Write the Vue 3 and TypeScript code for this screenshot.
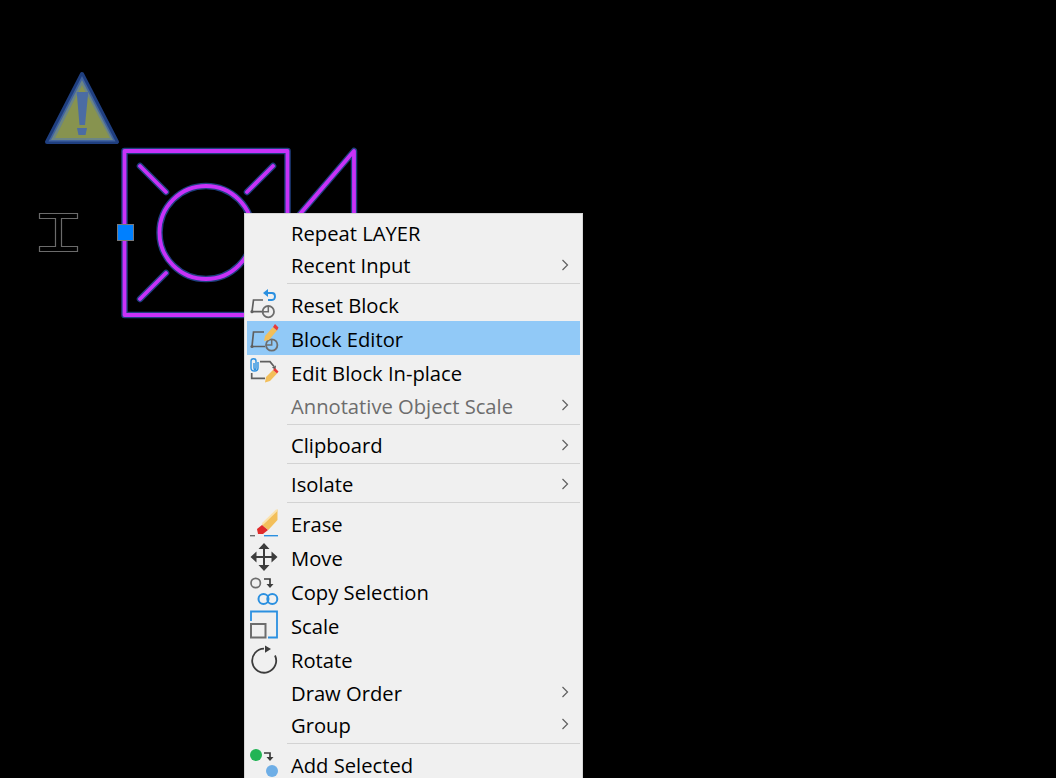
<script setup lang="ts">
type Row = { label?: string; icon?: string; sub?: boolean; disabled?: boolean; active?: boolean; kind?: string; sep?: string }
const rows: Row[] = [
  { label: 'Repeat LAYER' },
  { label: 'Recent Input', sub: true },
  { sep: 'base' },
  { label: 'Reset Block', icon: 'reset', kind: 'tall' },
  { label: 'Block Editor', icon: 'editor', kind: 'tall', active: true },
  { label: 'Edit Block In-place', icon: 'inplace', kind: 'tall' },
  { label: 'Annotative Object Scale', sub: true, disabled: true, kind: 'mid' },
  { sep: 'wide' },
  { label: 'Clipboard', sub: true },
  { sep: 'wide' },
  { label: 'Isolate', sub: true },
  { sep: 'base' },
  { label: 'Erase', icon: 'erase', kind: 'tall' },
  { label: 'Move', icon: 'move', kind: 'tall' },
  { label: 'Copy Selection', icon: 'copy', kind: 'tall' },
  { label: 'Scale', icon: 'scale', kind: 'tall' },
  { label: 'Rotate', icon: 'rotate', kind: 'tall' },
  { label: 'Draw Order', sub: true, kind: 'low' },
  { label: 'Group', sub: true, kind: 'low' },
  { sep: 'narrow' },
  { label: 'Add Selected', icon: 'add', kind: 'last' }
]
</script>

<template>
  <div class="screen">
    <svg class="drawing" width="1056" height="778" viewBox="0 0 1056 778" fill="none">
      <defs>
        <g id="shape">
          <rect x="124.500" y="151" width="163" height="164" />
          <circle cx="206" cy="232.500" r="46.500" />
          <path d="M140 166 166 192M273 166 247 192M140 299 166 273M300 214 354 151V320" />
        </g>
      </defs>
      <g stroke="#1f3f80" stroke-width="6.500" stroke-linecap="round" stroke-linejoin="round">
        <use href="#shape" />
      </g>
      <g stroke="#c832f8" stroke-width="3.800" stroke-linecap="round" stroke-linejoin="round">
        <use href="#shape" />
      </g>
      <path d="M82 74 117 142H47Z" fill="#1f3f80" stroke="#1f3f80" stroke-width="4" stroke-linejoin="round" />
      <path d="M82 76 115.500 141.500H48.500Z" fill="#41639f" />
      <path d="M82 80 113 140H51Z" fill="#6b8585" />
      <path d="M82 85 110 138H55Z" fill="#87934f" />
      <path d="M76.700 92H88.300L85 125H79.500ZM77 128H87L85.500 135H78.500Z" fill="#4b6ca3" />
      <path d="M39.500 213.500H77.500V218.500H61.500V246.500H77.500V251.500H39.500V246.500H55.500V218.500H39.500Z" stroke="#6b6b6b" stroke-width="1.200" />
      <rect x="117.500" y="224.500" width="16" height="16" fill="#0080ff" stroke="#77797c" />
    </svg>

    <div class="menu">
      <template v-for="(row, i) in rows" :key="i">
        <div v-if="row.sep" class="sep" :class="row.sep"></div>
        <div v-else class="row" :class="[row.kind, { active: row.active, disabled: row.disabled }]">
          <svg v-if="row.icon" class="icon" width="34" height="34" viewBox="0 0 34 34" fill="none" :class="row.icon">
            <g v-if="row.icon === 'reset'">
              <path d="M16 13H6.500L5 24.700H17" stroke="#5f5f5f" stroke-width="1.700" />
              <circle cx="5" cy="24.700" r="1.600" fill="#5f5f5f" />
              <circle cx="21.300" cy="24.700" r="5.700" stroke="#6d6d6d" stroke-width="1.800" />
              <path d="M21.300 19V24.700H16" stroke="#6d6d6d" stroke-width="1.500" />
              <path d="M18 6H25C29 6 29 13 25 13H21" stroke="#2b90e0" stroke-width="1.900" />
              <path d="M21 2 16 6 21 10Z" fill="#2b90e0" />
            </g>
            <g v-else-if="row.icon === 'editor'">
              <path d="M17 11H6.500L5 25.500H18" stroke="#5f5f5f" stroke-width="1.700" />
              <circle cx="5" cy="25.500" r="1.600" fill="#5f5f5f" />
              <circle cx="24.700" cy="24" r="5.700" stroke="#6d6d6d" stroke-width="1.800" />
              <path d="M24.700 18.500V24H19" stroke="#6d6d6d" stroke-width="1.500" />
              <path d="M18 15 26 6 30 9.500 22 19 17 20Z" fill="#f3bf5a" />
              <path d="M26 6 28 3 31.500 6.500 30 9.500Z" fill="#e83a3a" />
            </g>
            <g v-else-if="row.icon === 'inplace'">
              <path d="M7 8V13C7 15 9 15 9 13V6C9 3 4 3 4 6V13C4 17 11 17 11 13V7" stroke="#2b90e0" stroke-width="1.400" />
              <path d="M13 6.700H23L27 11.500" stroke="#5f5f5f" stroke-width="1.700" />
              <path d="M29 10.500 28.500 15 25 12.500Z" fill="#5f5f5f" />
              <path d="M4.700 18V23.300H18" stroke="#5f5f5f" stroke-width="1.700" />
              <path d="M19 22 26 15 30 18.500 23 26 18 27.500Z" fill="#f3bf5a" />
              <path d="M26 15 28 13 31.500 16.500 30 18.500Z" fill="#e83a3a" />
            </g>
            <g v-else-if="row.icon === 'erase'">
              <path d="M15 20 30.500 4.300V15L21.300 25Z" fill="#f3bf5a" />
              <path d="M15.500 19 30 5" stroke="#fbe2ad" stroke-width="2" />
              <path d="M10 24 15 20 21 25 16 29 11 29Z" fill="#e02b2b" />
              <path d="M3 30.700H8" stroke="#6d6d6d" stroke-width="1.400" />
              <path d="M17 30.700H31" stroke="#2b90e0" stroke-width="1.400" />
            </g>
            <g v-else-if="row.icon === 'move'">
              <path d="M17 8V28M7 18H27" stroke="#3c3c3c" stroke-width="2" />
              <path d="M17 4 22.500 10H11.500ZM17 32 11.500 26H22.500ZM3.500 18 9.500 12.500V23.500ZM30.500 18 24.500 23.500V12.500Z" fill="#3c3c3c" />
            </g>
            <g v-else-if="row.icon === 'copy'">
              <circle cx="8.700" cy="10" r="4.700" stroke="#6d6d6d" stroke-width="1.700" />
              <path d="M17 6H23V11" stroke="#3c3c3c" stroke-width="1.700" />
              <path d="M19.500 11H26.500L23 15Z" fill="#3c3c3c" />
              <circle cx="16.500" cy="26" r="5" stroke="#2b90e0" stroke-width="2" />
              <circle cx="25.300" cy="26" r="5" stroke="#2b90e0" stroke-width="2" />
            </g>
            <g v-else-if="row.icon === 'scale'">
              <path d="M4 14V4.500H30V30.500H21" stroke="#2b90e0" stroke-width="1.800" />
              <rect x="4" y="17" width="14.500" height="13.500" stroke="#6d6d6d" stroke-width="2" />
            </g>
            <g v-else-if="row.icon === 'rotate'">
              <path d="M28 14.500A12 12 0 1 1 17 7.700" stroke="#3c3c3c" stroke-width="1.800" />
              <path d="M18 4.500 24 8 18 11.700Z" fill="#3c3c3c" />
            </g>
            <g v-else-if="row.icon === 'add'">
              <circle cx="9" cy="11" r="6" fill="#22b455" />
              <path d="M17 9H23V13" stroke="#3c3c3c" stroke-width="1.700" />
              <path d="M19.500 13H26.500L23 17Z" fill="#3c3c3c" />
              <circle cx="25" cy="27" r="6" fill="#6eaee6" />
            </g>
          </svg>
          <span class="label">{{ row.label }}</span>
          <svg v-if="row.sub" class="chev" width="8" height="12" viewBox="0 0 8 12" fill="none">
            <path d="M1.500 1 6.500 6 1.500 11" stroke="#5f5f5f" stroke-width="1.200" />
          </svg>
        </div>
      </template>
    </div>
  </div>
</template>

<style>
html, body { margin: 0; background: #000; }
</style>

<style scoped>
.screen {
  position: relative;
  width: 1056px;
  height: 778px;
  overflow: hidden;
  background: #000;
}
.drawing {
  position: absolute;
  inset: 0;
}
.menu {
  position: absolute;
  left: 244px;
  top: 213px;
  width: 339px;
  box-sizing: border-box;
  padding: 3px 2px;
  background: #f0f0f0;
  border: 1px solid #d6d6d6;
  border-bottom: 0;
  font-family: "Open Sans", "Noto Sans", sans-serif;
  font-size: 20.200px;
  color: #000;
  display: flex;
  flex-direction: column;
}
.row {
  position: relative;
  box-sizing: border-box;
  height: 32px;
  display: flex;
  align-items: center;
  padding-left: 44px;
  flex: none;
}
.row.tall { height: 34px; padding-top: 2px; }
.row.mid { height: 33px; padding-top: 1px; }
.row.low { padding-top: 2px; }
.row.last { height: 34px; padding-top: 6px; }
.row.active { background: #91c9f7; }
.row.disabled { color: #6d6d6d; }
.label { white-space: nowrap; }
.icon {
  position: absolute;
  left: 0;
  top: 0;
  overflow: visible;
}
.icon.erase, .icon.move, .icon.copy, .icon.scale, .icon.rotate, .icon.add { top: -1px; }
.chev {
  position: absolute;
  right: 11px;
  top: 10px;
}
.sep {
  flex: none;
  margin-left: 40px;
  box-sizing: border-box;
  height: 6px;
  padding-top: 2px;
}
.sep.wide { height: 7px; }
.sep.narrow { height: 5px; padding-top: 3px; }
.sep::before {
  content: "";
  display: block;
  height: 1px;
  background: #d3d3d3;
}
</style>
